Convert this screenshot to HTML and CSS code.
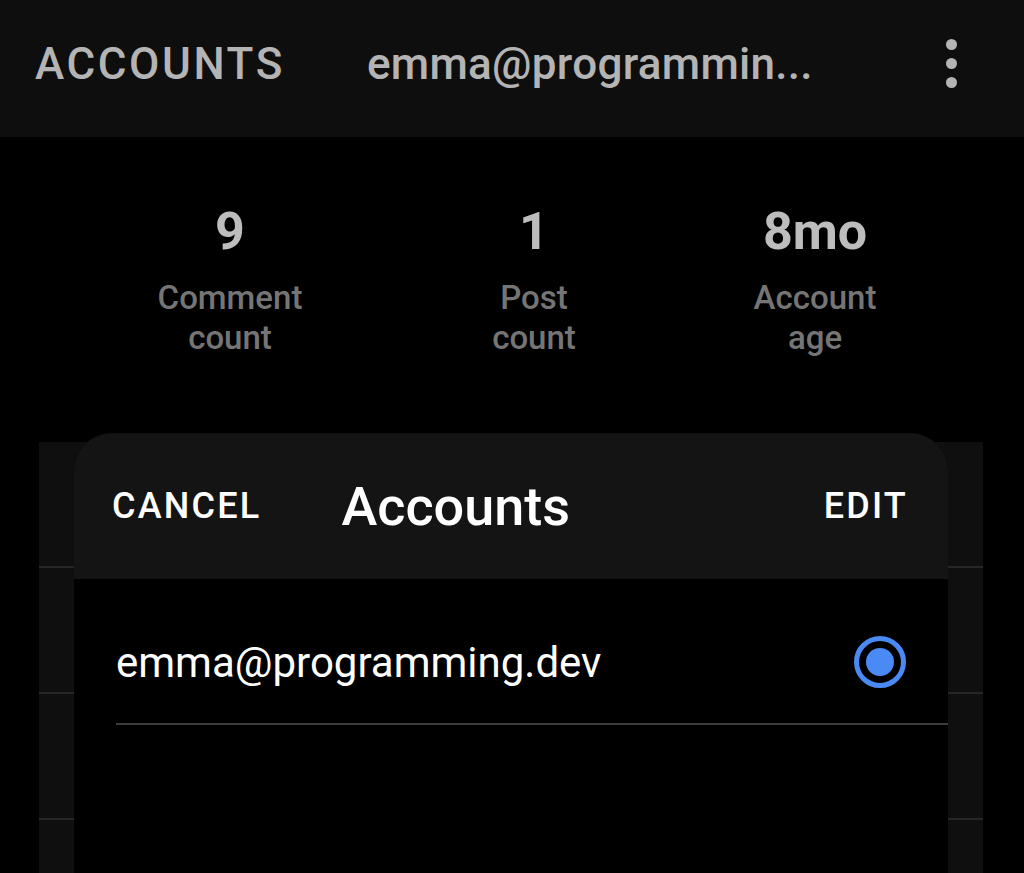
FILE: index.html
```html
<!DOCTYPE html>
<html lang="en">
<head>
<meta charset="UTF-8">
<meta name="viewport" content="width=device-width, initial-scale=1.0">
<title>Accounts</title>
<link rel="stylesheet" href="styles.css">
</head>
<body>
  <div class="appbar">
    <span class="appbar-title">ACCOUNTS</span>
    <span class="appbar-user">emma@programmin...</span>
    <div class="kebab">
      <span></span><span></span><span></span>
    </div>
  </div>

  <div class="stats">
    <div class="stat">
      <div class="stat-value">9</div>
      <div class="stat-label">Comment<br>count</div>
    </div>
    <div class="stat">
      <div class="stat-value">1</div>
      <div class="stat-label">Post<br>count</div>
    </div>
    <div class="stat">
      <div class="stat-value">8mo</div>
      <div class="stat-label">Account<br>age</div>
    </div>
  </div>

  <!-- list behind the sheet -->
  <div class="card">
    <div class="card-row"></div>
    <div class="card-row"></div>
    <div class="card-row"></div>
    <div class="card-row"></div>
  </div>

  <div class="sheet">
    <div class="sheet-header">
      <span class="sheet-btn">CANCEL</span>
      <span class="sheet-title">Accounts</span>
      <span class="sheet-btn sheet-edit">EDIT</span>
    </div>
    <div class="account-row">
      <span class="account-name">emma@programming.dev</span>
      <span class="radio"><span class="radio-dot"></span></span>
    </div>
  </div>
</body>
</html>
```

FILE: styles.css
```css
body {
  margin: 0;
  background-color: #000;
  font-family: Roboto, "Liberation Sans", sans-serif;
  height: 873px;
  overflow: hidden;
  position: relative;
}

.appbar {
  height: 137px;
  box-sizing: border-box;
  background-color: #0e0e0e;
  display: flex;
  align-items: center;
  padding: 0 35px 10px 35px;
  color: #b4b4b4;
  font-size: 44px;
  font-weight: 500;
}
.appbar-title {
  letter-spacing: 2.6px;
}
.appbar-user {
  margin-left: 82px;
  letter-spacing: 0.3px;
  flex: 1;
}
.kebab {
  display: flex;
  flex-direction: column;
  gap: 8px;
  margin-right: 32px;
}
.kebab span {
  width: 11px;
  height: 11px;
  border-radius: 50%;
  background-color: #b4b4b4;
}

.stats {
  display: grid;
  grid-template-columns: 304px 304px 258px;
  padding: 64px 0 0 78px;
  text-align: center;
}
.stat-value {
  font-size: 52px;
  font-weight: 700;
  color: #bdbdbd;
  line-height: 62px;
}
.stat-label {
  font-size: 33px;
  font-weight: 500;
  color: #757575;
  line-height: 40px;
  margin-top: 15px;
}

.card {
  margin: 84px 41px 0 39px;
  background-color: #0f0f0f;
}
.card-row {
  height: 124px;
  border-bottom: 2px solid #262626;
}

.sheet {
  position: absolute;
  left: 74px;
  top: 433px;
  width: 874px;
  bottom: 0;
  background-color: #000;
  border-radius: 38px 38px 0 0;
  overflow: hidden;
}
.sheet-header {
  height: 146px;
  background-color: #141414;
  display: flex;
  align-items: center;
  padding: 0 40px 0 38px;
  color: #fff;
}
.sheet-btn {
  font-size: 36px;
  font-weight: 500;
  letter-spacing: 2.2px;
}
.sheet-title {
  font-size: 54px;
  font-weight: 500;
  margin-left: 80px;
  flex: 1;
}

.account-row {
  display: flex;
  align-items: center;
  height: 122px;
  padding: 22px 42px 0 0;
  margin-left: 42px;
  border-bottom: 2px solid #3c3c3c;
}
.account-name {
  flex: 1;
  color: #fff;
  font-size: 42px;
}
.radio {
  width: 42px;
  height: 42px;
  border: 5px solid #4a8af4;
  border-radius: 50%;
  display: flex;
  align-items: center;
  justify-content: center;
}
.radio-dot {
  width: 28px;
  height: 28px;
  border-radius: 50%;
  background-color: #4a8af4;
}
```
